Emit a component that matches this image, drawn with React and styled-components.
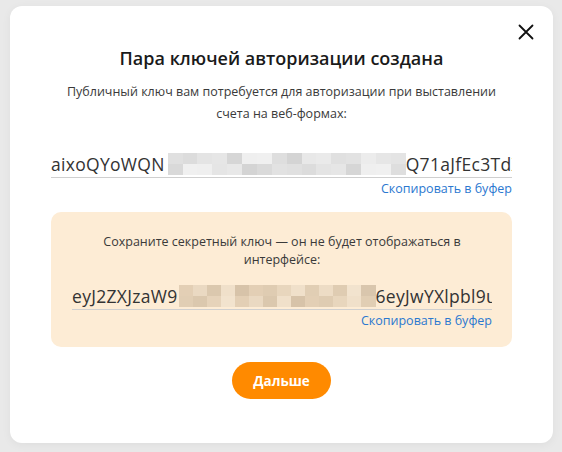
import React from "react";
import styled, { createGlobalStyle } from "styled-components";

const GlobalStyle = createGlobalStyle`
  html, body {
    margin: 0;
    padding: 0;
    background: #e9e9e9;
  }
  body {
    font-family: "Open Sans", "Liberation Sans", sans-serif;
    color: #333;
  }
`;

const Overlay = styled.div`
  width: 562px;
  height: 452px;
  box-sizing: border-box;
  padding: 6px 9px 9px 10px;
  background: #e9e9e9;
`;

const Modal = styled.div`
  position: relative;
  background: #fff;
  border-radius: 12px;
  height: 437px;
  box-sizing: border-box;
  padding: 40px 41px 0;
  display: flex;
  flex-direction: column;
  align-items: stretch;
  box-shadow: 0 2px 10px rgba(0, 0, 0, 0.05);
`;

const CloseButton = styled.button`
  position: absolute;
  top: 12px;
  right: 13px;
  width: 28px;
  height: 28px;
  padding: 0;
  border: none;
  background: transparent;
  cursor: pointer;
  display: flex;
  align-items: center;
  justify-content: center;
`;

const Title = styled.h2`
  margin: 0;
  font-size: 18px;
  line-height: 24px;
  font-weight: 600;
  color: #1a1a1a;
  text-align: center;
`;

const Note = styled.p`
  margin: ${(p) => p.$margin || "0"};
  font-size: 12.5px;
  line-height: ${(p) => p.$lh || "22px"};
  color: #3a3a3a;
  text-align: center;
`;

const KeyField = styled.div`
  display: flex;
  flex-direction: column;
  margin-top: ${(p) => p.$top || "0"};
`;

const KeyLine = styled.div`
  display: flex;
  align-items: center;
  white-space: nowrap;
  overflow: hidden;
  font-size: 17.5px;
  letter-spacing: 0.3px;
  line-height: 22px;
  color: #333;
  padding-bottom: 2px;
  border-bottom: 1px solid #cfcfcf;
`;

const Mosaic = styled.span`
  display: inline-grid;
  grid-template-columns: repeat(${(p) => p.$cols}, 1fr);
  grid-template-rows: 11px 11px;
  width: ${(p) => p.$width}px;
  margin-left: ${(p) => p.$offset || 0}px;
  flex-shrink: 0;
`;

const Cell = styled.span`
  display: block;
`;

const CopyLink = styled.a`
  align-self: flex-end;
  margin-top: 3px;
  font-size: 12.5px;
  line-height: 16px;
  color: #2b78d0;
  text-decoration: none;
  cursor: pointer;
`;

const SecretBox = styled.div`
  margin-top: 15px;
  background: #fdecd5;
  border-radius: 10px;
  padding: 21px 20px 18px 21px;
  display: flex;
  flex-direction: column;
`;

const NextButton = styled.button`
  align-self: center;
  margin-top: 15px;
  width: 99px;
  height: 37px;
  border: none;
  border-radius: 19px;
  background: #ff8a00;
  color: #fff;
  font-family: "Open Sans", "Liberation Sans", sans-serif;
  font-size: 13.5px;
  font-weight: 700;
  cursor: pointer;
`;

const greyShades = [
  "#d6d6d6", "#e4e4e4", "#ececec", "#e0e0e0", "#dadada", "#e8e8e8", "#dedede",
  "#efefef", "#d9d9d9", "#e6e6e6", "#dcdcdc", "#e2e2e2", "#eaeaea", "#d4d4d4",
  "#e5e5e5", "#f0f0f0",
];
const beigeShades = [
  "#ead9c2", "#dfccb2", "#e6d3ba", "#f0e0ca", "#d9c6ad", "#e3cfb5", "#eddcc5",
  "#dbc8ae", "#e8d6bd", "#f2e3ce", "#d7c3a9", "#e1ceb4",
];

const Blur = ({ cols, width, offset, shades, seed }) => {
  const cells = [];
  for (let i = 0; i < cols * 2; i++) {
    const c = shades[(i * 7 + seed + Math.floor(i / 3)) % shades.length];
    cells.push(<Cell key={i} style={{ background: c }} />);
  }
  return (
    <Mosaic $cols={cols} $width={width} $offset={offset}>
      {cells}
    </Mosaic>
  );
};

const CloseIcon = () => (
  <svg width="16" height="16" viewBox="0 0 16 16">
    <path d="M1.5 1.5 L14.5 14.5 M14.5 1.5 L1.5 14.5" stroke="#111" strokeWidth="1.8" strokeLinecap="round" />
  </svg>
);

export default function App() {
  return (
    <>
      <GlobalStyle />
      <Overlay>
        <Modal>
          <CloseButton aria-label="Закрыть">
            <CloseIcon />
          </CloseButton>
          <Title>Пара ключей авторизации создана</Title>
          <Note $margin="11px 0 0">
            Публичный ключ вам потребуется для авторизации при выставлении
            <br />
            счета на веб-формах:
          </Note>

          <KeyField $top="28px">
            <KeyLine>
              <span>aixoQYoWQN</span>
              <Blur cols={16} width={238} offset={3} shades={greyShades} seed={3} />
              <span>Q71aJfEc3TdXk</span>
            </KeyLine>
            <CopyLink>Скопировать в буфер</CopyLink>
          </KeyField>

          <SecretBox>
            <Note $lh="18px">
              Сохраните секретный ключ — он не будет отображаться в
              <br />
              интерфейсе:
            </Note>
            <KeyField $top="16px">
              <KeyLine>
                <span>eyJ2ZXJzaW9</span>
                <Blur cols={14} width={197} offset={1} shades={beigeShades} seed={5} />
                <span>6eyJwYXlpbl9uYW1l</span>
              </KeyLine>
              <CopyLink>Скопировать в буфер</CopyLink>
            </KeyField>
          </SecretBox>

          <NextButton>Дальше</NextButton>
        </Modal>
      </Overlay>
    </>
  );
}
